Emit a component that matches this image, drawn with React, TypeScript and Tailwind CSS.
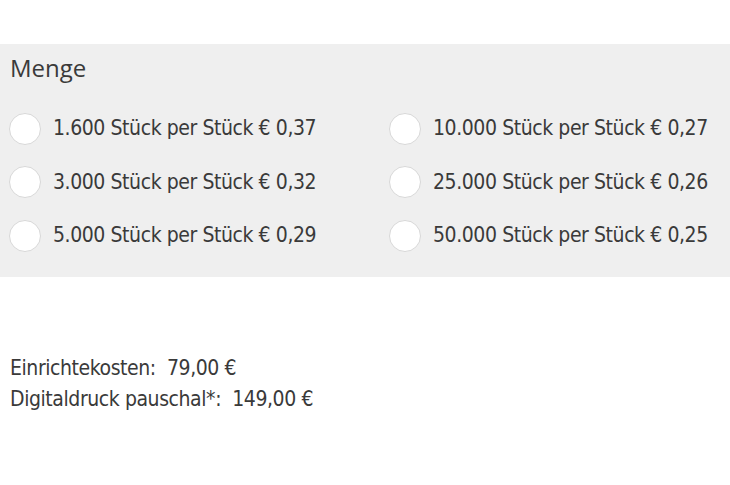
import React from "react";

const left = [
  "1.600 Stück per Stück € 0,37",
  "3.000 Stück per Stück € 0,32",
  "5.000 Stück per Stück € 0,29",
];
const right = [
  "10.000 Stück per Stück € 0,27",
  "25.000 Stück per Stück € 0,26",
  "50.000 Stück per Stück € 0,25",
];

function Option({ label }: { label: string }) {
  return (
    <label className="flex h-[53.5px] items-center gap-[12px]">
      <span className="block h-[32px] w-[32px] shrink-0 rounded-full border border-[#d8d8d8] bg-white" />
      <span className="whitespace-nowrap text-[21px] leading-none tracking-[-0.02em] text-[#3a3a3a]">
        {label}
      </span>
    </label>
  );
}

export default function App() {
  return (
    <div
      className="min-h-[485px] w-[730px] bg-white"
      style={{ fontFamily: '"DejaVu Sans Condensed", "Liberation Sans", sans-serif' }}
    >
      <div className="h-[44px]" />
      <div className="h-[233px] bg-[#efefef] pl-[9px]">
        <div
          className="pl-[1px] pt-[9px] text-[24px] leading-[30px] text-[#3a3a3a]"
          style={{ fontFamily: '"Open Sans", sans-serif' }}
        >
          Menge
        </div>
        <div className="mt-[19px] grid grid-cols-[380px_1fr]">
          <div className="flex flex-col">
            {left.map((l) => (
              <Option key={l} label={l} />
            ))}
          </div>
          <div className="flex flex-col">
            {right.map((l) => (
              <Option key={l} label={l} />
            ))}
          </div>
        </div>
      </div>
      <div className="pl-[10px] pt-[76px] text-[21px] leading-[31px] tracking-[-0.02em] text-[#3a3a3a]">
        <div>Einrichtekosten:&nbsp; 79,00 €</div>
        <div>Digitaldruck pauschal*:&nbsp; 149,00 €</div>
      </div>
    </div>
  );
}
